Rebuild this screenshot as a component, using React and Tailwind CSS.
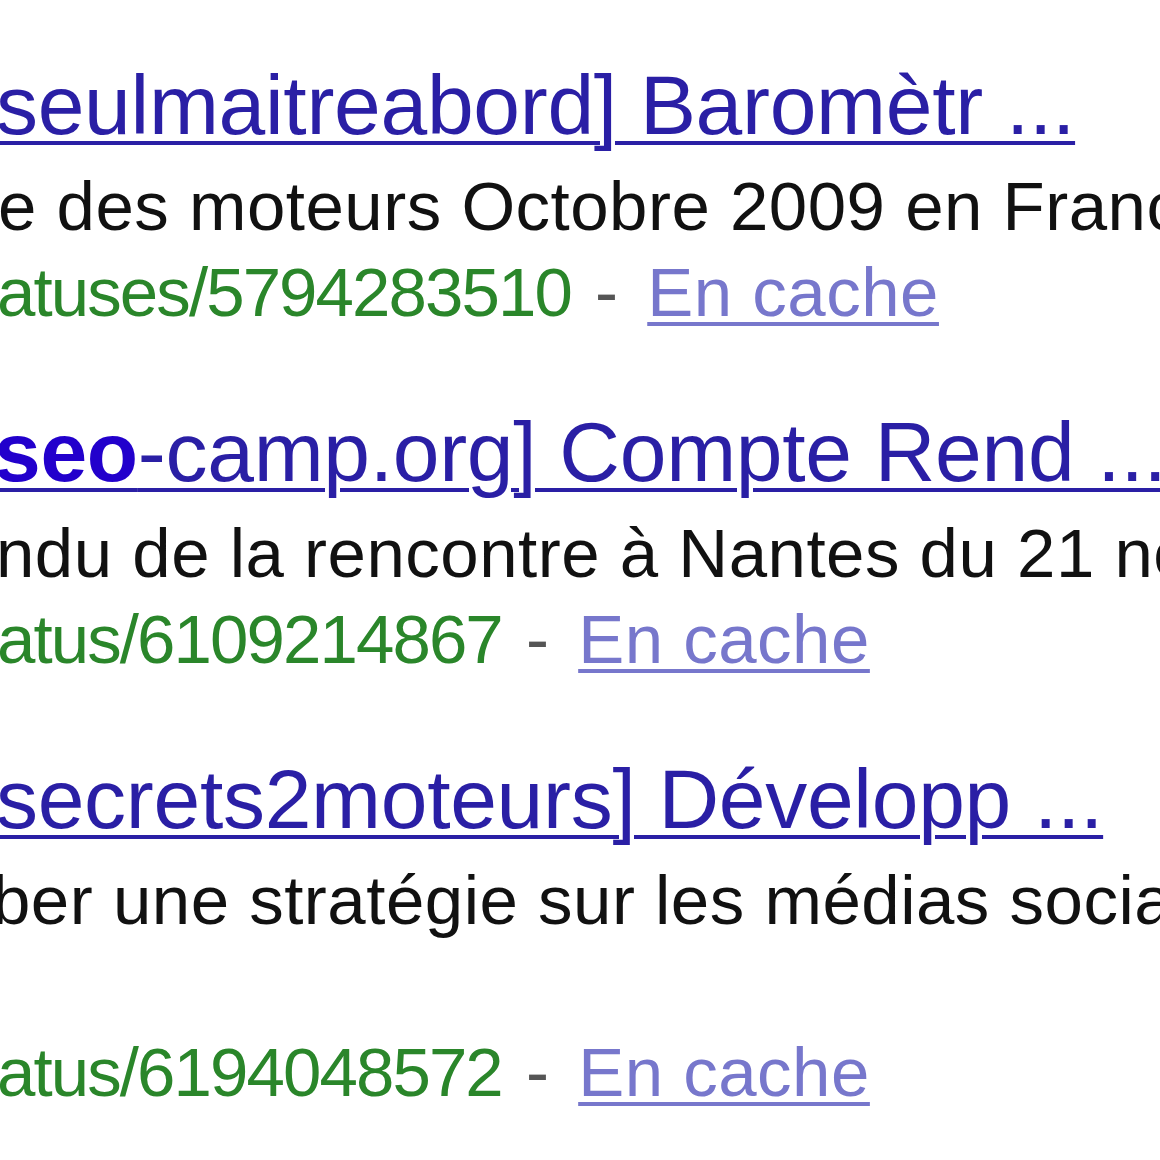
import React from 'react';

const results = [
  {
    title: [{ text: 'seulmaitreabord] Baromètr ...' }],
    titleShift: 'ml-[-4px]',
    snippet: ['e des moteurs Octobre 2009 en France'],
    snippetShift: 'ml-[-2px]',
    url: 'atuses/5794283510',
    urlShift: 'ml-[-3px]',
  },
  {
    title: [{ text: 'seo', bold: true }, { text: '-camp.org] Compte Rend ...' }],
    titleShift: 'ml-[-6px]',
    snippet: ['ndu de la rencontre à Nantes du 21 nov'],
    snippetShift: 'ml-[-4px]',
    url: 'atus/6109214867',
    urlShift: 'ml-[-3px]',
  },
  {
    title: [{ text: 'secrets2moteurs] Développ ...' }],
    titleShift: 'ml-[-4px]',
    snippet: ['ber une stratégie sur les médias sociaux', ''],
    snippetShift: 'ml-[-8px]',
    url: 'atus/6194048572',
    urlShift: 'ml-[-3px]',
  },
];

export default function App() {
  return (
    <div
      className="w-[1160px] h-[1160px] overflow-hidden bg-white pt-[46px]"
      style={{ fontFamily: '"Liberation Sans", Arial, sans-serif' }}
    >
      <div className="flex flex-col gap-[57px]">
        {results.map((r, i) => (
          <div key={i} className="flex flex-col whitespace-nowrap">
            <div className={`text-[84px] leading-[118px] tracking-[-0.3px] text-[#2a1fa5] ${r.titleShift}`}>
              <a className="underline decoration-[4px] underline-offset-[7px]">
                {r.title.map((t, j) =>
                  t.bold ? (
                    <b key={j} className="font-bold text-[#2200cc]">{t.text}</b>
                  ) : (
                    <span key={j}>{t.text}</span>
                  )
                )}
              </a>
            </div>
            {r.snippet.map((s, j) => (
              <div key={j} className={`text-[69px] leading-[86px] h-[86px] text-[#111] tracking-[0.5px] ${r.snippetShift}`}>
                {s}
              </div>
            ))}
            <div className={`text-[69px] leading-[86px] ${r.urlShift}`}>
              <span className="text-[#2a862a] tracking-[-1.9px]">{r.url}</span>
              <span className="text-[#555] tracking-[5px]"> - </span>
              <a className="text-[#7777cc] tracking-[0.5px] underline decoration-[4px] underline-offset-[6px]">En cache</a>
            </div>
          </div>
        ))}
      </div>
    </div>
  );
}
